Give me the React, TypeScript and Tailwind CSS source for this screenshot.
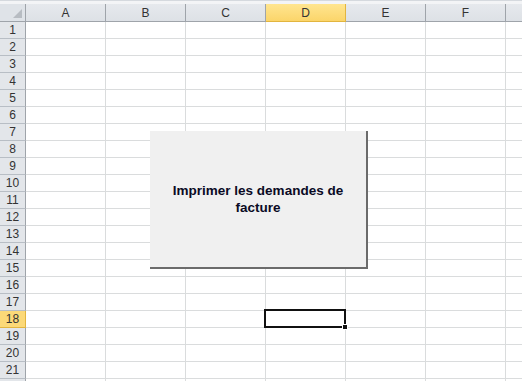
import React from "react";

const cols = ["A", "B", "C", "D", "E", "F", "G"];
const rows = Array.from({ length: 22 }, (_, i) => i + 1);

export default function App() {
  return (
    <div
      className="relative h-[381px] w-[522px] overflow-hidden bg-white text-[12px] text-[#333]"
      style={{ fontFamily: '"Liberation Sans", Arial, sans-serif' }}
    >
      <div className="h-[4px] border-t border-[#d5d9de] bg-[#f3f4f6]" />

      {/* column headers */}
      <div className="flex h-[18px]">
        <div className="relative w-[26px] shrink-0 border-r border-b border-[#9fa4aa] bg-[#dfe3e8]">
          <div className="absolute bottom-[3px] right-[3px] h-0 w-0 border-b-[9px] border-l-[9px] border-b-[#b7bcc2] border-l-transparent" />
        </div>
        {cols.map((c) => (
          <div
            key={c}
            className={
              c === "D"
                ? "flex w-[80px] shrink-0 items-center justify-center border-r border-b border-[#e2b53f] bg-gradient-to-b from-[#ffe58f] to-[#fbd56a] text-[#333]"
                : "flex w-[80px] shrink-0 items-center justify-center border-r border-b border-[#9fa4aa] bg-gradient-to-b from-[#e6e9ed] to-[#dde1e6]"
            }
          >
            {c}
          </div>
        ))}
      </div>

      {rows.map((r) => (
        <div key={r} className="flex h-[17px]">
          <div
            className={
              r === 18
                ? "flex w-[26px] shrink-0 items-center justify-center border-r border-b border-[#e2b53f] bg-[#fcd978] text-[#333]"
                : "flex w-[26px] shrink-0 items-center justify-center border-r border-b border-[#9fa4aa] border-b-[#b8bec5] bg-[#e3e6ea]"
            }
          >
            {r}
          </div>
          {cols.map((c) => (
            <div key={c} className="w-[80px] shrink-0 border-r border-b border-[#dadcdd]" />
          ))}
        </div>
      ))}

      {/* selected cell D18 */}
      <div className="absolute left-[264px] top-[309px] h-[19px] w-[82px] border-2 border-[#111]">
        <div className="absolute -bottom-[4px] -right-[4px] h-[6px] w-[6px] border border-white bg-[#111]" />
      </div>

      {/* floating button */}
      <div className="absolute left-[150px] top-[131px] flex h-[138px] w-[218px] items-center justify-center border-r-2 border-b-2 border-[#6b6b6b] bg-[#f0f0f0] px-3 text-center text-[13.5px] font-bold leading-[17px] text-[#0a0a24]">
        Imprimer les demandes de
        <br />
        facture
      </div>
    </div>
  );
}
